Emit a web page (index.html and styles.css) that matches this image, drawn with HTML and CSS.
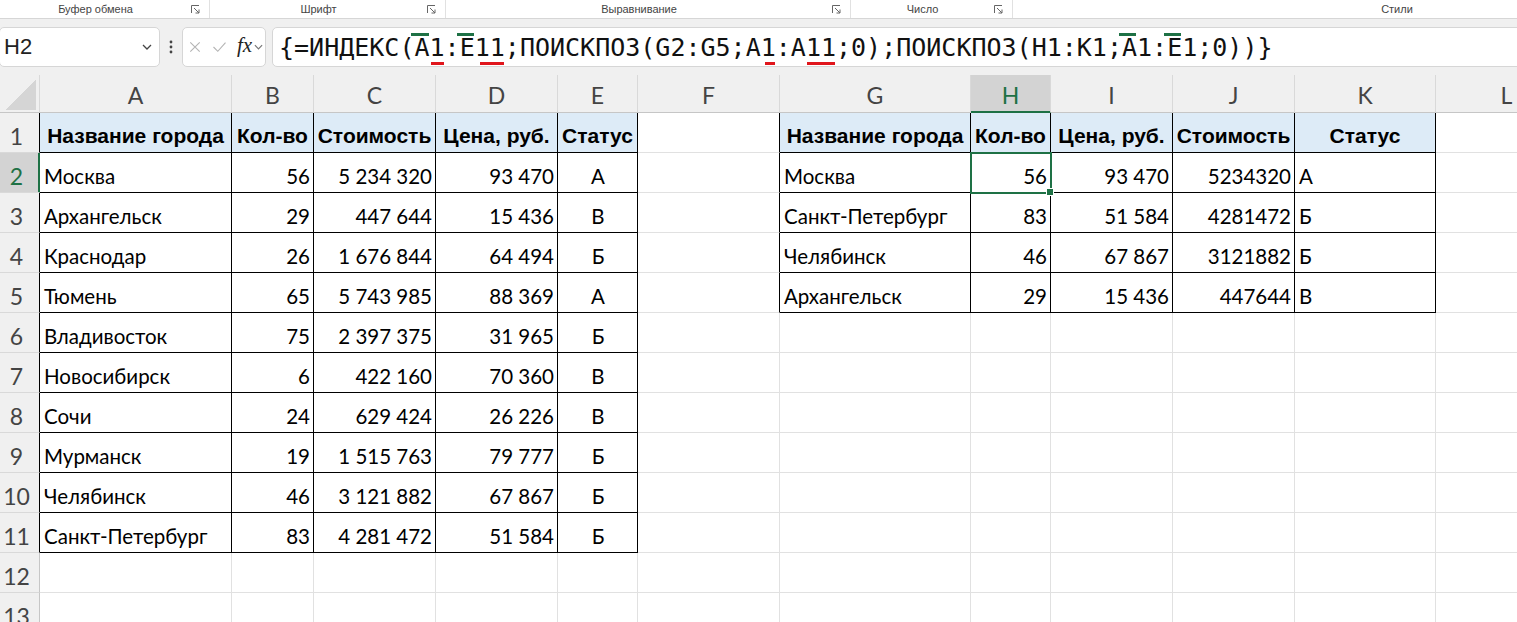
FILE: index.html
```html
<!DOCTYPE html>
<html lang="ru">
<head>
	<meta charset="UTF-8">
	<title>Книга1 - Excel</title>
	<link rel="stylesheet" href="styles.css">
</head>
<body>
	<div class="ribbon">
		<div class="group g1"><span class="label">Буфер обмена</span><svg class="launch" viewBox="0 0 9 9"><path d="M.5 8V.5H8M3 3l5 5M8 4.5V8H4.5"/></svg></div>
		<div class="group g2"><span class="label">Шрифт</span><svg class="launch" viewBox="0 0 9 9"><path d="M.5 8V.5H8M3 3l5 5M8 4.5V8H4.5"/></svg></div>
		<div class="group g3"><span class="label">Выравнивание</span><svg class="launch" viewBox="0 0 9 9"><path d="M.5 8V.5H8M3 3l5 5M8 4.5V8H4.5"/></svg></div>
		<div class="group g4"><span class="label">Число</span><svg class="launch" viewBox="0 0 9 9"><path d="M.5 8V.5H8M3 3l5 5M8 4.5V8H4.5"/></svg></div>
		<div class="group g5"><span class="label">Стили</span></div>
	</div>

	<div class="formula-row">
		<div class="name-box">
			<span>H2</span>
			<svg class="chev" viewBox="0 0 10 6"><path d="M1 1l4 4 4-4"/></svg>
		</div>
		<div class="dots"><svg viewBox="0 0 4 14"><circle cx="2" cy="2" r="1.4"/><circle cx="2" cy="7" r="1.4"/><circle cx="2" cy="12" r="1.4"/></svg></div>
		<div class="fx-box">
			<svg class="ico" viewBox="0 0 14 14"><path d="M1.5 1.5l11 11M12.5 1.5l-11 11"/></svg>
			<svg class="ico" viewBox="0 0 16 14"><path d="M1 7l5 5L15 2"/></svg>
			<span class="fx">fx</span>
			<svg class="chev small" viewBox="0 0 10 6"><path d="M1 1l4 4 4-4"/></svg>
		</div>
		<div class="formula">{=ИНДЕКС(<span class="ov">A</span><span class="un">1</span>:<span class="ov">E</span><span class="un un2">11</span>;ПОИСКПОЗ(G2:G5;A<span class="un un3">1</span>:A<span class="un">11</span>;0);ПОИСКПОЗ(H1:K1;<span class="ov">A</span>1:<span class="ov">E</span>1;0))}</div>
	</div>

	<table class="sheet">
		<colgroup>
			<col class="w-rh"><col class="w-a"><col class="w-b"><col class="w-c"><col class="w-d"><col class="w-e"><col class="w-f">
			<col class="w-g"><col class="w-h"><col class="w-i"><col class="w-j"><col class="w-k"><col class="w-l">
		</colgroup>
		<tr class="cols">
			<th class="corner"></th><th>A</th><th>B</th><th>C</th><th>D</th><th>E</th><th>F</th>
			<th>G</th><th class="on">H</th><th>I</th><th>J</th><th>K</th><th>L</th>
		</tr>
		<tr class="t">
			<th class="rh">1</th>
			<td class="hd b">Название города</td><td class="hd b">Кол-во</td><td class="hd b">Стоимость</td><td class="hd b">Цена, руб.</td><td class="hd b">Статус</td>
			<td class="fl"></td>
			<td class="hd b">Название города</td><td class="hd b">Кол-во</td><td class="hd b">Цена, руб.</td><td class="hd b">Стоимость</td><td class="hd b">Статус</td>
			<td></td>
		</tr>
		<tr class="t">
			<th class="rh on">2</th>
			<td class="b">Москва</td><td class="b n">56</td><td class="b n">5 234 320</td><td class="b n">93 470</td><td class="b c">А</td>
			<td class="fl"></td>
			<td class="b">Москва</td><td class="b n cur">56</td><td class="b n">93 470</td><td class="b n">5234320</td><td class="b">А</td>
			<td></td>
		</tr>
		<tr class="t">
			<th class="rh">3</th>
			<td class="b">Архангельск</td><td class="b n">29</td><td class="b n">447 644</td><td class="b n">15 436</td><td class="b c">В</td>
			<td class="fl"></td>
			<td class="b">Санкт-Петербург</td><td class="b n">83</td><td class="b n">51 584</td><td class="b n">4281472</td><td class="b">Б</td>
			<td></td>
		</tr>
		<tr class="t">
			<th class="rh">4</th>
			<td class="b">Краснодар</td><td class="b n">26</td><td class="b n">1 676 844</td><td class="b n">64 494</td><td class="b c">Б</td>
			<td class="fl"></td>
			<td class="b">Челябинск</td><td class="b n">46</td><td class="b n">67 867</td><td class="b n">3121882</td><td class="b">Б</td>
			<td></td>
		</tr>
		<tr class="t">
			<th class="rh">5</th>
			<td class="b">Тюмень</td><td class="b n">65</td><td class="b n">5 743 985</td><td class="b n">88 369</td><td class="b c">А</td>
			<td class="fl"></td>
			<td class="b">Архангельск</td><td class="b n">29</td><td class="b n">15 436</td><td class="b n">447644</td><td class="b">В</td>
			<td></td>
		</tr>
		<tr class="t">
			<th class="rh">6</th>
			<td class="b">Владивосток</td><td class="b n">75</td><td class="b n">2 397 375</td><td class="b n">31 965</td><td class="b c">Б</td>
			<td></td><td></td><td></td><td></td><td></td><td></td><td></td>
		</tr>
		<tr class="t">
			<th class="rh">7</th>
			<td class="b">Новосибирск</td><td class="b n">6</td><td class="b n">422 160</td><td class="b n">70 360</td><td class="b c">В</td>
			<td></td><td></td><td></td><td></td><td></td><td></td><td></td>
		</tr>
		<tr class="t">
			<th class="rh">8</th>
			<td class="b">Сочи</td><td class="b n">24</td><td class="b n">629 424</td><td class="b n">26 226</td><td class="b c">В</td>
			<td></td><td></td><td></td><td></td><td></td><td></td><td></td>
		</tr>
		<tr class="t">
			<th class="rh">9</th>
			<td class="b">Мурманск</td><td class="b n">19</td><td class="b n">1 515 763</td><td class="b n">79 777</td><td class="b c">Б</td>
			<td></td><td></td><td></td><td></td><td></td><td></td><td></td>
		</tr>
		<tr class="t">
			<th class="rh">10</th>
			<td class="b">Челябинск</td><td class="b n">46</td><td class="b n">3 121 882</td><td class="b n">67 867</td><td class="b c">Б</td>
			<td></td><td></td><td></td><td></td><td></td><td></td><td></td>
		</tr>
		<tr class="t">
			<th class="rh">11</th>
			<td class="b">Санкт-Петербург</td><td class="b n">83</td><td class="b n">4 281 472</td><td class="b n">51 584</td><td class="b c">Б</td>
			<td></td><td></td><td></td><td></td><td></td><td></td><td></td>
		</tr>
		<tr>
			<th class="rh">12</th>
			<td></td><td></td><td></td><td></td><td></td><td></td><td></td><td></td><td></td><td></td><td></td><td></td>
		</tr>
		<tr>
			<th class="rh">13</th>
			<td></td><td></td><td></td><td></td><td></td><td></td><td></td><td></td><td></td><td></td><td></td><td></td>
		</tr>
	</table>
</body>
</html>
```

FILE: styles.css
```css
*{margin:0;padding:0;box-sizing:border-box;}
body{
	width:1517px;
	height:622px;
	overflow:hidden;
	background:#fff;
	color:#000;
	font-family:Lato,"Open Sans",sans-serif;
}

/* ribbon group captions */
.ribbon{
	display:flex;
	height:19px;
	overflow:hidden;
	border-bottom:1px solid #d6d6d6;
	background:#fff;
	font:11px "Liberation Sans",sans-serif;
	color:#444;
}
.group{
	display:grid;
	flex-shrink:0;
	grid-template-columns:1fr 12px;
	align-items:center;
	padding-right:6px;
	border-right:1px solid #e1e1e1;
}
.g1{width:210px;}
.g2{width:236px;}
.g3{width:405px;}
.g4{width:162px;}
.g5{width:786px;border-right:none;}
.label{text-align:center;white-space:nowrap;}
.launch{width:9px;height:9px;fill:none;stroke:#666;stroke-width:1;}

/* name box + formula bar */
.formula-row{
	display:flex;
	align-items:center;
	height:56px;
	background:#f0f0f0;
}
.name-box{
	display:flex;
	align-items:center;
	justify-content:space-between;
	width:161px;
	height:40px;
	margin-left:-1px;
	padding:0 7px 0 4px;
	background:#fff;
	border:1px solid #d6d6d6;
	border-radius:5px;
	font:22px "Liberation Sans",sans-serif;
	color:#222;
}
.chev{width:10px;height:6px;fill:none;stroke:#444;stroke-width:1.3;}
.chev.small{width:9px;stroke:#777;}
.dots{width:22px;display:flex;justify-content:center;}
.dots svg{width:4px;height:14px;fill:#444;}
.fx-box{
	display:flex;
	align-items:center;
	width:84px;
	height:40px;
	padding-left:6px;
	background:#fff;
	border:1px solid #d6d6d6;
	border-radius:5px;
}
.ico{width:12px;height:12px;fill:none;stroke:#b4b4b4;stroke-width:1.3;margin-right:11px;}
.ico + .ico{width:15px;margin-right:10px;}
.fx{
	font:italic 21px "Liberation Serif",serif;
	color:#222;
	margin:-3px 2px 0 0;
}
.formula{
	flex:1;
	height:40px;
	margin:0 -20px 0 6px;
	padding:2px 0 0 6px;
	background:#fff;
	border:1px solid #d6d6d6;
	border-radius:5px;
	font:25px "DejaVu Sans Mono","Liberation Mono",monospace;
	line-height:36px;
	white-space:nowrap;
	color:#111;
}
.ov,.un{position:relative;}
.ov::before{
	content:"";
	position:absolute;
	left:-3px;
	right:1px;
	top:0;
	height:3px;
	background:#1e7145;
}
.un::after{
	content:"";
	position:absolute;
	left:1px;
	right:1px;
	bottom:-3px;
	height:3px;
	background:#e0161c;
}
.un2::after{left:5px;}
.un3::after{left:4px;}

/* sheet grid */
.sheet{
	border-collapse:separate;
	border-spacing:0;
	table-layout:fixed;
	width:1578px;
}
.w-rh{width:40px;}
.w-a{width:192px;}
.w-b{width:82px;}
.w-c{width:122px;}
.w-d{width:122px;}
.w-e{width:80px;}
.w-f{width:142px;}
.w-g{width:191px;}
.w-h{width:80px;}
.w-i{width:122px;}
.w-j{width:122px;}
.w-k{width:141px;}
.w-l{width:142px;}

.sheet tr{height:40px;}
.sheet tr.cols{height:38px;}
.sheet th,.sheet td{
	border-right:1px solid #e1e1e1;
	border-bottom:1px solid #e1e1e1;
	white-space:nowrap;
	overflow:hidden;
}
.cols th{
	padding-top:3px;
	background:#f0f0f0;
	border-right-color:#d9d9d9;
	border-bottom-color:#c6c6c6;
	font-weight:normal;
	font-size:23px;
	color:#444;
	vertical-align:middle;
}
.cols th.on{
	background:#d3d3d3;
	color:#1e7145;
	border-bottom-color:#1e7145;
	box-shadow:inset 0 -1px 0 #1e7145;
}
.cols th.corner{
	background:#f0f0f0 linear-gradient(135deg,transparent 50%,#d5d5d5 50%) no-repeat right 3px bottom 2px/31px 31px;
}
.rh{
	padding:0 6px 3px 0;
	background:#f0f0f0;
	border-right-color:#c6c6c6 !important;
	border-bottom-color:#d9d9d9 !important;
	font-weight:normal;
	font-size:23px;
	line-height:26px;
	color:#444;
	vertical-align:bottom;
}
tr.t .rh{border-right-color:#000 !important;}
tr.t .rh.on{
	background:#d3d3d3;
	color:#1e7145;
	border-right-color:#1e7145 !important;
	box-shadow:inset -1px 0 0 #1e7145;
}

.sheet td{
	padding:0 3px 3px 4px;
	font-size:20.5px;
	line-height:26px;
	vertical-align:bottom;
}
.sheet td.n{text-align:right;}
.sheet td.c{text-align:center;}
.sheet td.hd{
	background:#ddebf7;
	font:bold 21px/26px "Liberation Sans",sans-serif;
	text-align:center;
	padding:0 0 3px;
}
.sheet td.b{border-right-color:#000;border-bottom-color:#000;}
.sheet td.fl{border-right-color:#000;}
.sheet td.cur{
	position:relative;
	overflow:visible;
	outline:2px solid #1e7145;
	outline-offset:-1px;
}
.sheet td.cur::after{
	content:"";
	position:absolute;
	right:-4px;
	bottom:-4px;
	width:6px;
	height:6px;
	background:#1e7145;
	border:1px solid #fff;
}
```
